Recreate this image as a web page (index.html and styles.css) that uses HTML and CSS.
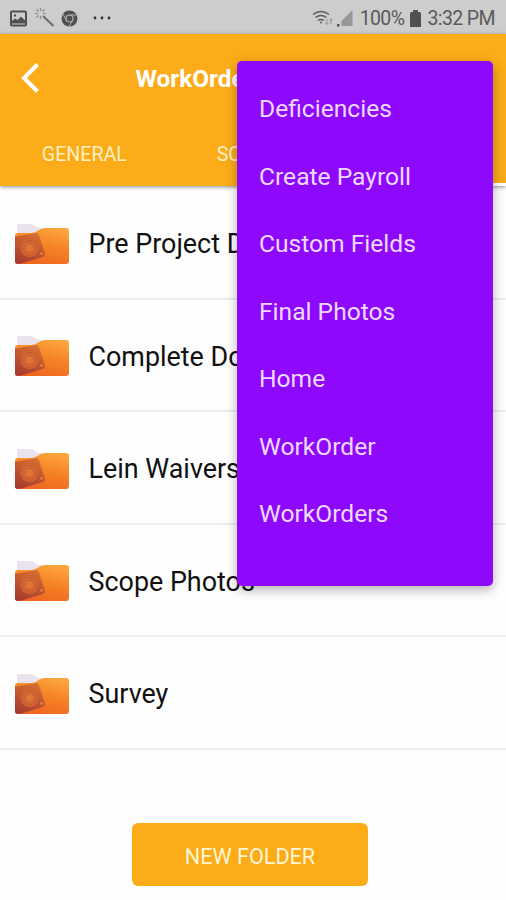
FILE: index.html
```html
<!DOCTYPE html>
<html lang="en">
<head>
    <meta charset="UTF-8">
    <title>WorkOrder</title>
    <link rel="stylesheet" href="styles.css">
</head>
<body>

<!-- Shared folder icon -->
<svg class="defs" width="0" height="0">
    <defs>
        <linearGradient id="front" x1="0.3" y1="1" x2="0.6" y2="0">
            <stop offset="0" stop-color="#ef6420"/>
            <stop offset="0.5" stop-color="#f68426"/>
            <stop offset="1" stop-color="#fdab42"/>
        </linearGradient>
        <linearGradient id="camera" x1="0.7" y1="0" x2="0.3" y2="1">
            <stop offset="0" stop-color="#d8702f"/>
            <stop offset="1" stop-color="#a53a30"/>
        </linearGradient>
        <clipPath id="frontClip">
            <path d="M0 13q0-3 3-3h13q4 0 7-2.500T30 5h21q3 0 3 3v30q0 3-3 3H3q-3 0-3-3z"/>
        </clipPath>
        <symbol id="folder" viewBox="0 0 54 41">
            <path d="M2 12V2.500Q2 1 3.500 1H15q3 0 5 2t5 2h25v7z" fill="#e9e3ee"/>
            <g clip-path="url(#frontClip)">
                <rect width="54" height="41" fill="url(#front)"/>
                <path d="M-1 14L21 10q2 0 3 2l6 19q0 2-2 3L8 40l-9 2z" fill="url(#camera)"/>
                <circle cx="14.500" cy="25" r="9" fill="#d76a34"/>
                <circle cx="14.500" cy="25" r="7.300" fill="none" stroke="#c1532f" stroke-width="1"/>
                <circle cx="14.500" cy="25" r="4.500" fill="#df7537" stroke="#c65a30" stroke-width="1"/>
                <circle cx="26.500" cy="30.500" r="1.300" fill="#ec8347"/>
            </g>
        </symbol>
    </defs>
</svg>

<div class="status-bar">
    <div class="status-left">
        <svg width="17" height="17" viewBox="0 0 17 17">
            <rect x="1" y="1.500" width="15" height="14" rx="1" fill="none" stroke="#505050" stroke-width="2"/>
            <path d="M2 13.500V11l3-2.500 2.500 1.500L11 6.500l4 4v3z" fill="#505050"/>
            <circle cx="5" cy="5.500" r="1.200" fill="#505050"/>
        </svg>
        <svg width="20" height="20" viewBox="0 0 20 20" fill="none" stroke="#707070">
            <path d="M8 8l10.500 10" stroke-width="2.200"/>
            <path d="M5.500 0v3M5.500 8v3M0 5.500h3M8 5.500h3M1.500 1.500l2 2M9.500 1.500l-2 2M1.500 9.500l2-2" stroke="#8a8a8a" stroke-width="1.200"/>
        </svg>
        <svg class="chrome" width="17" height="17" viewBox="0 0 17 17">
            <circle cx="8.500" cy="8.500" r="8" fill="#505050"/>
            <circle cx="8.500" cy="8.500" r="3.500" fill="#505050" stroke="#b4b4b4" stroke-width="1.200"/>
            <path d="M8.500 5h7M5.500 10.300L2 4.200M11.500 10.300L8 16.500" stroke="#b4b4b4" stroke-width="1"/>
        </svg>
        <svg class="dots" width="18" height="4" viewBox="0 0 18 4" fill="#303030">
            <circle cx="2" cy="2" r="1.400"/><circle cx="9" cy="2" r="1.400"/><circle cx="16" cy="2" r="1.400"/>
        </svg>
    </div>
    <div class="status-right">
        <svg width="22" height="18" viewBox="0 0 22 18" fill="none" stroke="#5c5c5c" stroke-width="1.500">
            <path d="M1 5.500q8-6 16 0M3.500 8.500q5.500-4 11 0M6 11.500q3-2.200 6 0"/>
            <circle cx="9" cy="13.500" r="1" fill="#5c5c5c" stroke="none"/>
            <path d="M15 10v5M13.500 13.500l1.500 2 1.500-2M19 15v-5M17.500 11.500l1.500-2 1.500 2" stroke="#969696" stroke-width="1"/>
        </svg>
        <svg class="signal" width="17" height="17" viewBox="0 0 17 17">
            <path d="M16.500 0v16H5.500v-5z" fill="#989898"/>
            <path d="M1 14h2.500v2.500H1z" fill="#555"/>
        </svg>
        <span class="percent">100%</span>
        <svg class="battery" width="11" height="17" viewBox="0 0 11 17">
            <path d="M3 0h5v2h1.500Q11 2 11 3.500V17H0V3.500Q0 2 1.500 2H3z" fill="#505050"/>
        </svg>
        <span class="clock">3:32 PM</span>
    </div>
</div>

<header class="header">
    <div class="toolbar">
        <svg class="back" width="20" height="32" viewBox="0 0 20 32">
            <path d="M17.500 2.500L4 16l13.500 13.500" fill="none" stroke="#fff" stroke-width="4"/>
        </svg>
        <h1 class="title">WorkOrder</h1>
    </div>
    <nav class="tabs">
        <div class="tab">GENERAL</div>
        <div class="tab">SCOPE</div>
        <div class="tab active"></div>
    </nav>
</header>

<ul class="folders">
    <li class="folder"><svg class="folder-icon"><use href="#folder"/></svg>Pre Project D</li>
    <li class="folder"><svg class="folder-icon"><use href="#folder"/></svg>Complete Do</li>
    <li class="folder"><svg class="folder-icon"><use href="#folder"/></svg>Lein Waivers</li>
    <li class="folder"><svg class="folder-icon"><use href="#folder"/></svg>Scope Photos</li>
    <li class="folder"><svg class="folder-icon"><use href="#folder"/></svg>Survey</li>
</ul>

<button class="new-folder">NEW FOLDER</button>

<div class="menu">
    <div class="menu-item">Deficiencies</div>
    <div class="menu-item">Create Payroll</div>
    <div class="menu-item">Custom Fields</div>
    <div class="menu-item">Final Photos</div>
    <div class="menu-item">Home</div>
    <div class="menu-item">WorkOrder</div>
    <div class="menu-item">WorkOrders</div>
</div>

</body>
</html>
```
FILE: styles.css
```css
* { box-sizing: border-box; }
body {
    margin: 0;
    height: 900px;
    position: relative;
    overflow: hidden;
    background: #fefefe;
    font-family: Roboto, Arial, sans-serif;
}
svg { display: block; flex: none; }
.defs { position: absolute; }

/* Status bar */
.status-bar {
    display: flex;
    justify-content: space-between;
    align-items: center;
    height: 34px;
    padding: 2px 11px 0 10px;
    background: #cdcdcd;
    color: #5a5a5a;
    font-size: 19.5px;
    letter-spacing: -0.6px;
}
.status-left, .status-right { display: flex; align-items: center; }
.status-left { gap: 8px; }
.status-left .chrome { margin-left: -2px; }
.status-left .dots { margin-left: 7px; }
.signal { margin-left: 2px; }
.percent { margin-left: 7px; }
.battery { margin-left: 6px; }
.clock { margin-left: 6px; }

/* Header */
.header {
    position: relative;
    height: 152px;
    background: #fbac18;
    color: #fff;
    box-shadow: 0 1px 4px rgba(0, 0, 0, 0.45);
}
.toolbar {
    display: flex;
    align-items: center;
    height: 88px;
    padding-left: 20px;
}
.title {
    margin: 0 0 0 95.5px;
    font-size: 24.4px;
    font-weight: bold;
}
.tabs {
    display: grid;
    grid-template-columns: repeat(3, 1fr);
    height: 64px;
}
.tab {
    display: flex;
    align-items: center;
    justify-content: center;
    color: #fff0c4;
    font-size: 19.6px;
}
.tab:nth-child(2) { justify-content: flex-start; padding-left: 48px; }
.tab.active { border-bottom: 3px solid #fff; }

/* Folder list */
.folders {
    margin: 0;
    padding: 1px 0 0;
    list-style: none;
}
.folder {
    display: flex;
    align-items: center;
    gap: 19.5px;
    height: 112.5px;
    padding: 4px 0 0 15px;
    border-bottom: 2px solid #ededed;
    color: #111;
    font-size: 26.9px;
}
.folder-icon { width: 54px; height: 41px; margin-top: -2px; }

.new-folder {
    display: block;
    width: 236px;
    height: 63px;
    margin: 73.5px 0 0 132px;
    padding: 4px 0 0;
    border: none;
    border-radius: 6px;
    background: #fbac18;
    color: #fff5d4;
    font-family: inherit;
    font-size: 21.6px;
}

/* Dropdown menu */
.menu {
    position: absolute;
    top: 61px;
    left: 237px;
    width: 256px;
    height: 525px;
    padding: 14px 22px;
    border-radius: 5px;
    background: #8e09fc;
    box-shadow: 0 4px 12px rgba(0, 0, 0, 0.3);
    color: #f0d9ff;
    font-size: 24.6px;
}
.menu-item {
    display: flex;
    align-items: center;
    height: 67.5px;
}
```
